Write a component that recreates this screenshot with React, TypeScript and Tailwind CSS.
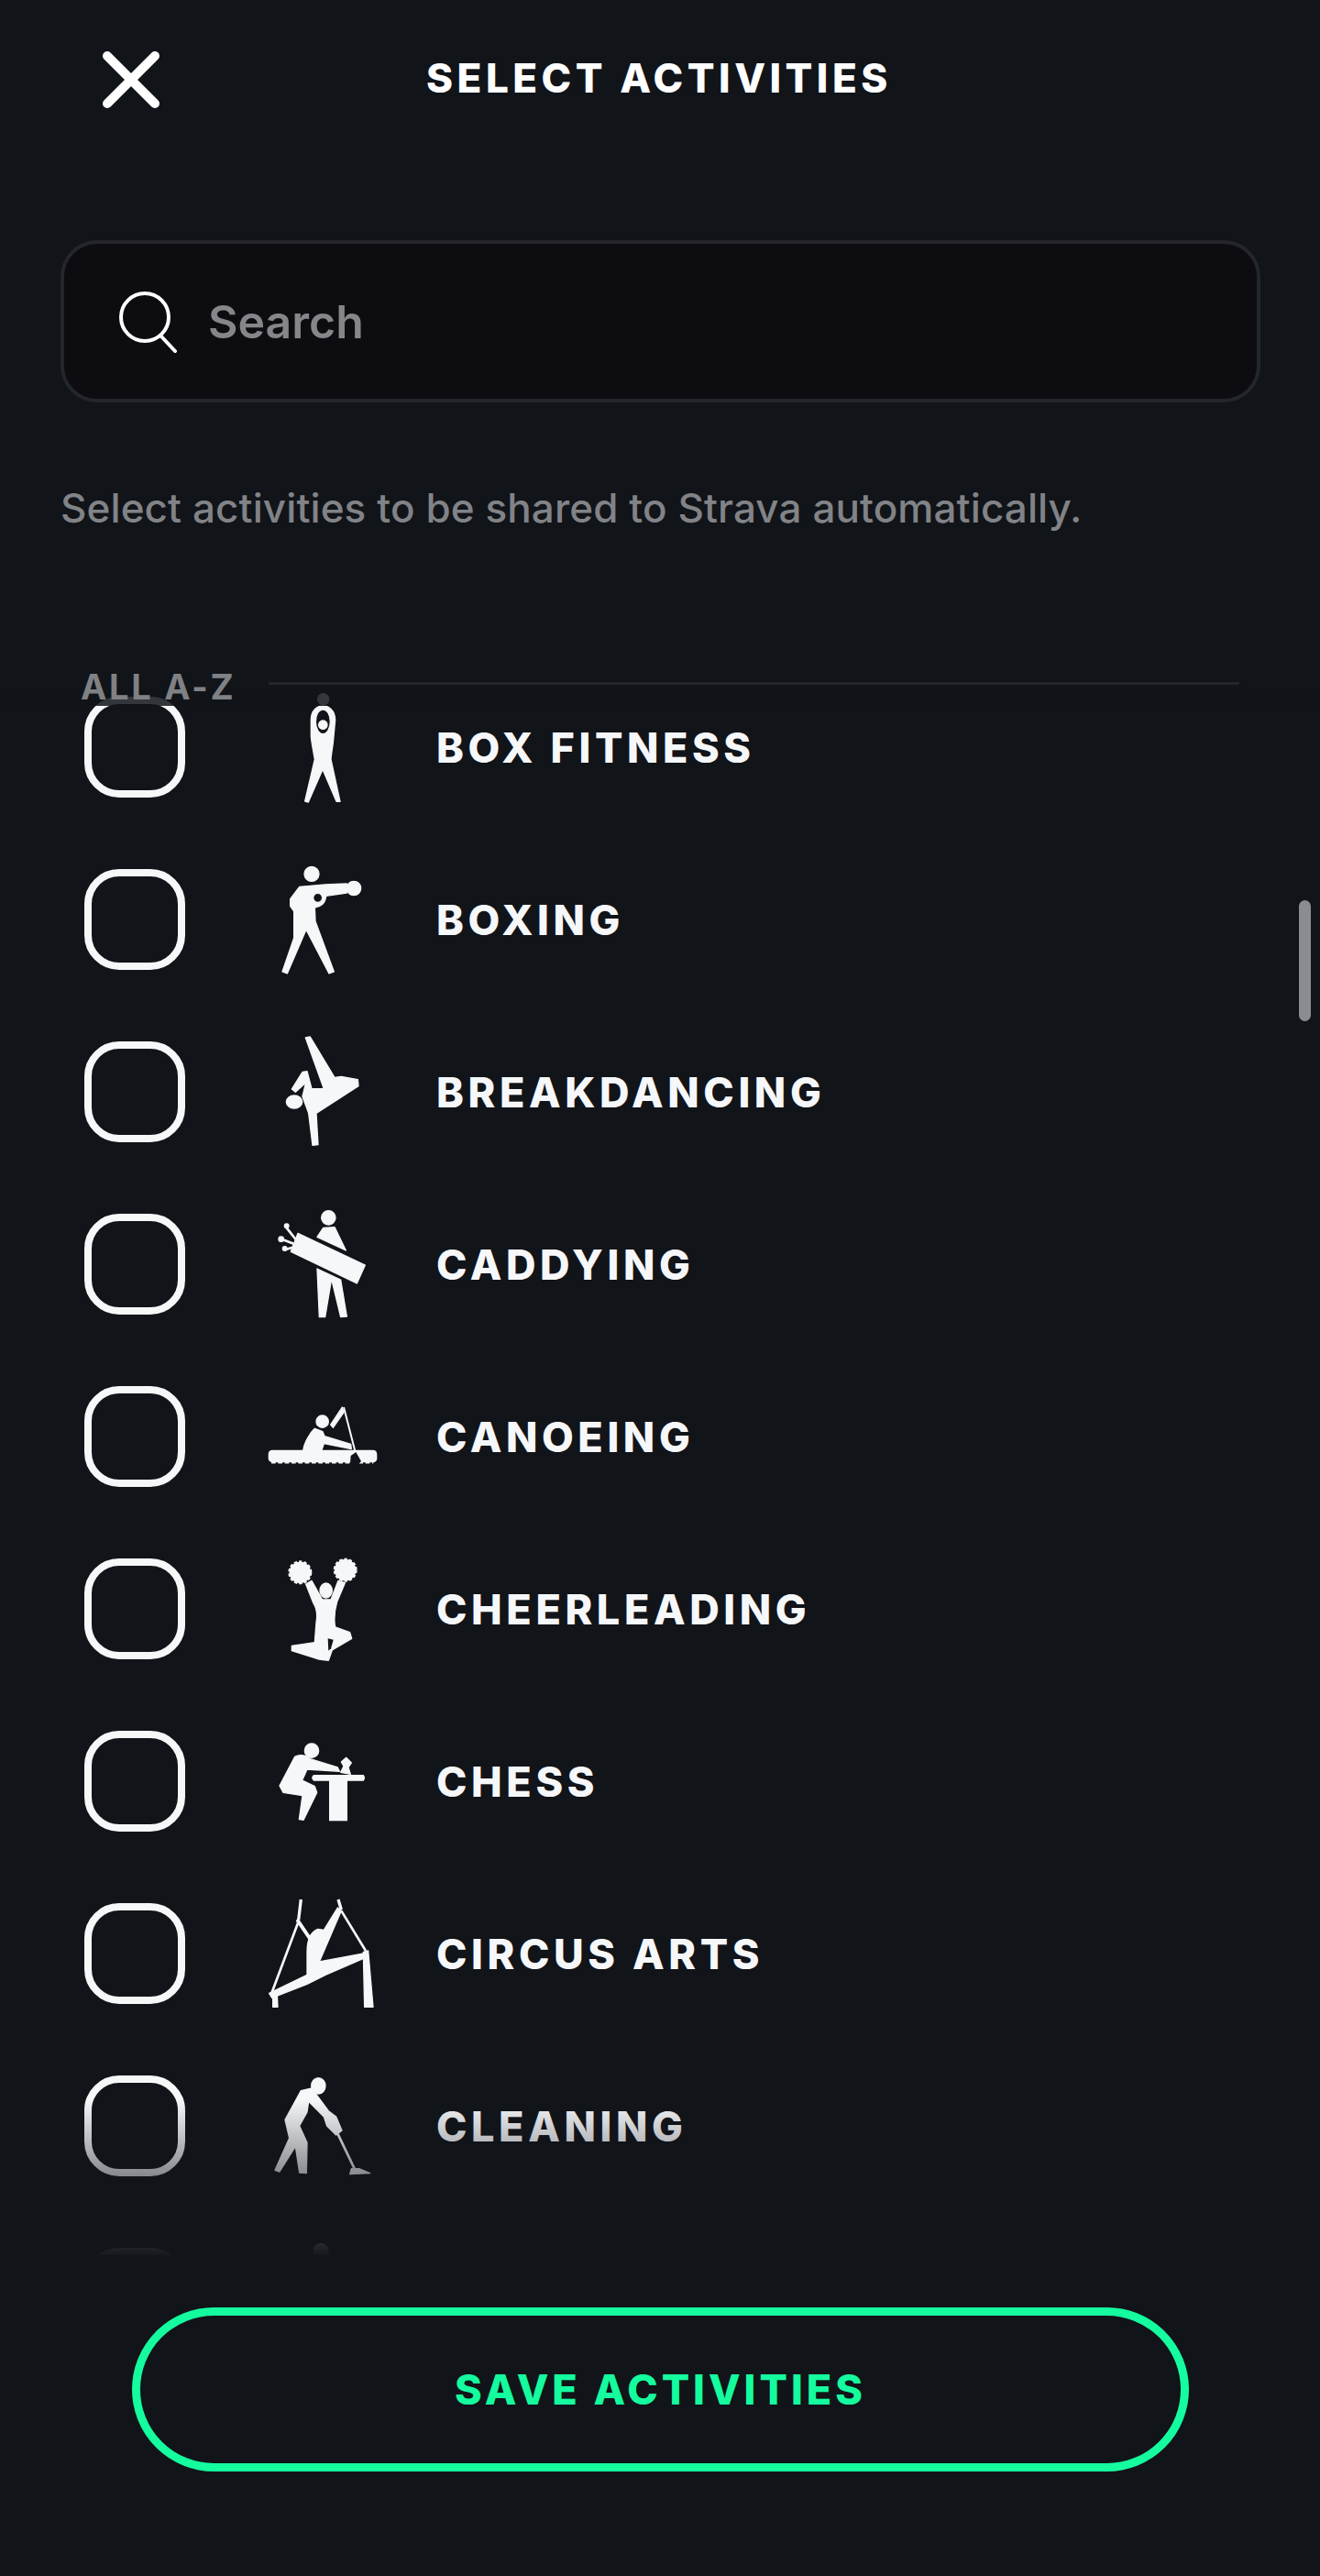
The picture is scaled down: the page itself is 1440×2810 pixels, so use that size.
import React from 'react';

const BG = '#111419';

const Svg = ({ box, children }: { box: string; children: React.ReactNode }) => (
  <svg
    width="130"
    height="130"
    viewBox={box}
    fill="#f6f7f9"
    stroke="#f6f7f9"
    strokeWidth="4"
    strokeLinejoin="round"
    className="shrink-0"
  >
    {children}
  </svg>
);

const BoxFitness = () => (
  <Svg box="675 30 390 390">
    <circle cx="878" cy="68" r="18" />
    <path
      fillRule="evenodd"
      d="M838 135 C838 105 858 90 877 90 C896 90 916 105 917 135 L912 190 C910 220 904 245 903 265 L933 403 L921 403 L876 298 L829 405 L818 402 L850 265 C846 240 840 212 838 190 Z M877 102 C862 102 853 120 853 142 C853 164 864 182 877 182 C890 182 901 164 901 142 C901 120 892 102 877 102 Z"
    />
    <circle cx="877" cy="152" r="14" />
  </Svg>
);

const Boxing = () => (
  <Svg box="675 594 390 390">
    <circle cx="840" cy="640" r="24" />
    <circle cx="978" cy="687" r="23" />
    <path
      fillRule="evenodd"
      d="M800 682 L885 675 L955 672 L955 702 L887 712 C884 738 870 746 850 750 L852 795 L913 960 L897 966 L822 822 L760 966 L744 960 L782 850 L782 762 L770 745 L770 722 Z M860 703 A15 15 0 1 0 860 733 A15 15 0 1 0 860 703 Z"
    />
  </Svg>
);

const Breakdancing = () => (
  <Svg box="0 0 390 390">
    <ellipse cx="108" cy="228" rx="26" ry="21" />
    <path d="M145 18 L160 15 L240 148 L262 145 L316 155 L318 176 L180 265 L186 368 L168 370 L155 265 L135 210 L146 165 L112 196 L100 186 L135 130 L150 128 L165 185 L205 185 Z" />
  </Svg>
);

const Caddying = () => (
  <Svg box="675 42 390 390">
    <circle cx="895" cy="85" r="23" />
    <path d="M858 148 L878 118 L915 116 L952 192 Z" />
    <path d="M795 136 L1015 240 L988 300 L772 196 Z" />
    <path d="M858 252 L935 288 L955 408 L935 410 L905 285 L884 410 L865 410 Z" />
    <path d="M850 152 L985 216" stroke={BG} strokeWidth="3" fill="none" />
    <path d="M795 165 L758 118 M785 172 L742 155 M778 182 L752 190" strokeWidth="8" strokeLinecap="round" fill="none" />
    <circle cx="758" cy="112" r="7" />
    <circle cx="740" cy="155" r="8" />
    <circle cx="752" cy="186" r="7" />
  </Svg>
);

const Canoeing = () => (
  <Svg box="675 606 390 390">
    <circle cx="875" cy="752" r="20" />
    <path d="M850 775 L876 785 L882 800 L968 826 L970 842 L880 824 L872 848 L812 848 C815 822 835 788 850 775 Z" />
    <path d="M902 762 L940 705 L945 722 L910 772 Z" />
    <path d="M945 705 L985 860" strokeWidth="6" fill="none" />
    <path d="M712 847 L1040 847 Q1052 847 1052 860 L1052 875 Q1050 884 1038 884 L712 884 Q700 882 700 872 L700 860 Q700 847 712 847 Z" />
    <path d="M708 887 L1042 887" strokeWidth="5" strokeDasharray="14 8" fill="none" />
    <path d="M968 864 L985 852 L1002 882 L988 898 L966 890 Z" fill={BG} stroke="none" />
  </Svg>
);

const Cheerleading = () => (
  <Svg box="0 0 390 390">
    <circle cx="127" cy="76" r="35" strokeWidth="8" strokeDasharray="10 6" />
    <circle cx="127" cy="76" r="32" />
    <circle cx="275" cy="68" r="35" strokeWidth="8" strokeDasharray="10 6" />
    <circle cx="275" cy="68" r="32" />
    <ellipse cx="212" cy="135" rx="20" ry="24" />
    <path d="M146 114 L165 103 L200 165 L228 165 L252 103 L274 110 L248 172 C240 200 238 235 242 255 L290 272 L296 292 L232 330 L220 364 L190 360 L100 332 L100 316 L175 305 L180 240 C185 212 180 190 170 175 Z" />
    <path d="M218 292 L236 296 L228 325 L220 332 Z" fill={BG} stroke="none" />
  </Svg>
);

const Chess = () => (
  <Svg box="0 0 390 390">
    <circle cx="165" cy="95" r="23" />
    <path d="M110 115 C125 106 150 110 160 122 L250 150 L256 163 L150 156 L134 192 L175 212 L182 232 L138 322 L124 320 L135 242 L72 232 L60 210 Z" />
    <path d="M172 176 L334 176 Q340 184 334 192 L172 192 Q163 184 172 176 Z" />
    <rect x="222" y="190" width="60" height="135" stroke="none" />
    <path d="M260 166 L270 146 L262 132 L278 118 L295 135 L285 150 L292 172 Z" />
  </Svg>
);

const CircusArts = () => (
  <Svg box="0 0 390 390">
    <path d="M130 18 L122 85 M252 18 L262 52" strokeWidth="10" fill="none" />
    <path d="M120 95 L32 330 M262 55 L342 186" strokeWidth="8" fill="none" />
    <path d="M120 88 L162 150" strokeWidth="12" strokeLinecap="round" fill="none" />
    <path d="M38 330 L52 330 L54 370 L38 370 Z" />
    <path d="M334 190 L350 186 L366 370 L338 370 Z" />
    <path d="M26 325 L150 265 L150 190 C150 150 160 125 185 115 L205 118 L250 45 L262 55 L190 222 L335 195 L338 210 L210 265 L150 295 L35 340 Z" />
  </Svg>
);

const Cleaning = () => (
  <Svg box="0 0 390 390">
    <ellipse cx="187" cy="64" rx="23" ry="26" />
    <path d="M130 80 L165 72 L220 146 L245 165 L264 210 L245 225 L215 195 L205 165 L155 115 L150 150 L125 195 L150 250 L148 350 L125 348 L112 262 L60 345 L45 340 L92 235 L78 175 Z" />
    <path d="M250 220 L305 335" strokeWidth="8" fill="none" />
    <path d="M295 335 L320 335 L356 350 L290 353 Z" />
  </Svg>
);

// next row is almost entirely faded out, only the top of its figure shows
const NextRowIcon = () => (
  <Svg box="0 0 390 390">
    <circle cx="195" cy="40" r="24" />
  </Svg>
);

const activities: { name: string; Icon: React.FC }[] = [
  { name: 'BOX FITNESS', Icon: BoxFitness },
  { name: 'BOXING', Icon: Boxing },
  { name: 'BREAKDANCING', Icon: Breakdancing },
  { name: 'CADDYING', Icon: Caddying },
  { name: 'CANOEING', Icon: Canoeing },
  { name: 'CHEERLEADING', Icon: Cheerleading },
  { name: 'CHESS', Icon: Chess },
  { name: 'CIRCUS ARTS', Icon: CircusArts },
  { name: 'CLEANING', Icon: Cleaning },
  { name: '', Icon: NextRowIcon },
];

const ActivityRow = ({ name, Icon }: { name: string; Icon: React.FC }) => (
  <div className="flex h-[188px] items-center pl-[92px]">
    <div className="h-[110px] w-[110px] shrink-0 rounded-[38px] border-[8px] border-[#f6f7f9]" />
    <div className="ml-[83px] w-[130px] shrink-0">
      <Icon />
    </div>
    {name && (
      <span className="ml-[61px] mt-[2px] text-[45px] font-extrabold tracking-[4.6px] text-[#f6f7f9]">{name}</span>
    )}
  </div>
);

export default function App() {
  return (
    <div className="relative flex h-[2810px] w-[1440px] flex-col overflow-hidden bg-[#111419] font-['Inter',sans-serif]">
      {/* Header */}
      <div className="mt-[56px] flex h-[62px] items-center pl-[112px]">
        <svg width="62" height="62" viewBox="0 0 62 62" fill="none" stroke="#fff" strokeWidth="10" strokeLinecap="round">
          <path d="M5 5 L57 57 M57 5 L5 57" />
        </svg>
        <h1 className="-mt-[4px] ml-[291px] text-[44px] font-extrabold tracking-[4.5px] text-white">SELECT ACTIVITIES</h1>
      </div>

      {/* Search */}
      <div className="ml-[66px] mt-[144px] flex h-[177px] w-[1309px] items-center rounded-[40px] border-[4px] border-[#24262b] bg-[#0c0c11] pl-[60px]">
        <svg width="64" height="68" viewBox="0 0 64 68" fill="none" stroke="#fff" strokeWidth="4">
          <circle cx="28" cy="29" r="26" />
          <path d="M46 50 L61 66" strokeLinecap="round" />
        </svg>
        <span className="ml-[33px] mt-[2px] text-[50px] font-semibold text-[#85868a]">Search</span>
      </div>

      <p className="ml-[66px] mt-[87px] text-[44px] font-medium leading-[56px] tracking-[0.1px] text-[#818387]">
        Select activities to be shared to Strava automatically.
      </p>

      {/* Section label */}
      <div className="relative z-10 ml-[88px] mr-[88px] mt-[148px] flex h-[40px] items-center">
        <span className="-mt-[2px] text-[38px] font-bold tracking-[2.7px] text-[#808185]">ALL A-Z</span>
        <div className="ml-[36px] -mt-[10px] h-[3px] flex-1 bg-[#24262b]" />
      </div>

      {/* List, scrolled part-way */}
      <div className="relative -mt-[18px] h-[1708px] overflow-hidden">
        <div className="-mt-[31px]">
          {activities.map((a) => (
            <ActivityRow key={a.name} name={a.name} Icon={a.Icon} />
          ))}
        </div>
        <div className="absolute inset-x-0 top-0 h-[18px] bg-[#111419]/85" />
        <div className="absolute inset-x-0 bottom-0 h-[170px] bg-gradient-to-b from-[#111419]/0 to-[#111419]/[0.98]" />
      </div>

      {/* Save */}
      <div className="ml-[144px] mt-[57px] flex h-[179px] w-[1153px] items-center justify-center rounded-full border-[9px] border-[#15fc9f]">
        <span className="text-[45px] font-extrabold tracking-[4px] text-[#15fc9f]">SAVE ACTIVITIES</span>
      </div>

      {/* Scrollbar */}
      <div className="absolute left-[1417px] top-[982px] h-[132px] w-[13px] rounded-full bg-[#8a8c90]" />
    </div>
  );
}
